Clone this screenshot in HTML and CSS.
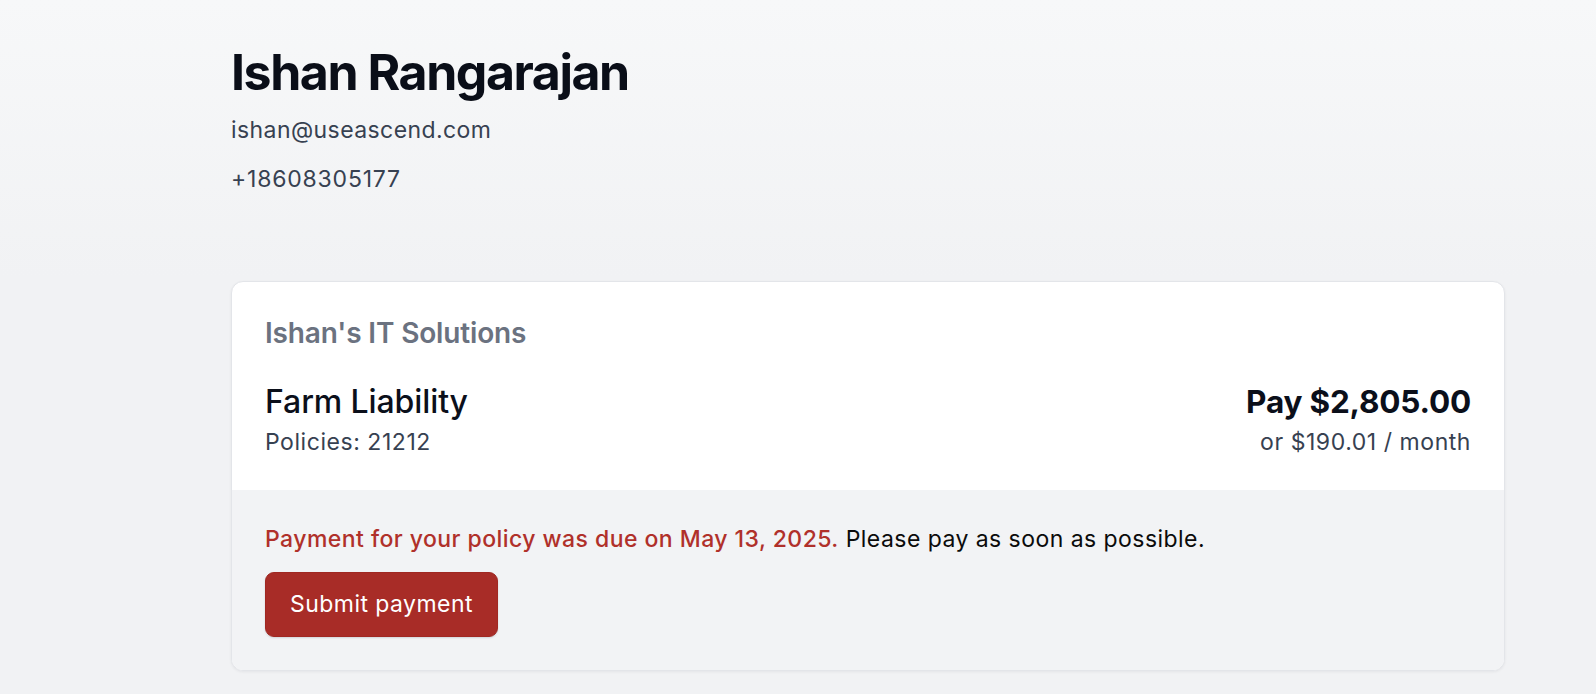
FILE: index.html
```html
<!DOCTYPE html>
<html lang="en">
<head>
<meta charset="utf-8">
<title>Ishan Rangarajan</title>
<link rel="stylesheet" href="styles.css">
</head>
<body>
<main class="page">
  <header class="profile">
    <h1 class="profile-name">Ishan Rangarajan</h1>
    <p class="profile-email">ishan@useascend.com</p>
    <p class="profile-phone">+18608305177</p>
  </header>

  <section class="card">
    <div class="card-body">
      <h2 class="company">Ishan's IT Solutions</h2>
      <div class="policy-row">
        <div class="policy-info">
          <div class="policy-name">Farm Liability</div>
          <div class="policy-meta">Policies: 21212</div>
        </div>
        <div class="policy-price">
          <div class="price-total">Pay $2,805.00</div>
          <div class="price-monthly">or $190.01 / month</div>
        </div>
      </div>
    </div>
    <div class="card-footer">
      <p class="notice"><span class="notice-due">Payment for your policy was due on May 13, 2025.</span> Please pay as soon as possible.</p>
      <button class="btn-pay" type="button">Submit payment</button>
    </div>
  </section>
</main>
</body>
</html>
```

FILE: styles.css
```css
* { box-sizing: border-box; }

html, body {
  margin: 0;
  height: 100%;
}

body {
  font-family: Inter, "Noto Sans", "Liberation Sans", sans-serif;
  background: linear-gradient(180deg, #f7f8f9 0%, #f1f2f4 40%, #f1f2f4 100%);
  color: #0b0f1a;
}

.page {
  padding: 42px 91px 0 231px;
}

.profile-name {
  margin: 0;
  font-size: 50px;
  line-height: 60px;
  font-weight: 700;
  color: #0a0e18;
  letter-spacing: -1.45px;
}

.profile-email,
.profile-phone {
  margin: 0;
  font-size: 23px;
  line-height: 34px;
  color: #374151;
}

.profile-email { margin-top: 11px; letter-spacing: 0.42px; }
.profile-phone { margin-top: 15px; letter-spacing: 0.8px; }

.card {
  margin-top: 85px;
  background: #ffffff;
  border: 1px solid #e3e5e9;
  border-radius: 12px;
  box-shadow: 0 1px 3px rgba(16, 24, 40, 0.06);
  overflow: hidden;
}

.card-body {
  padding: 32px 33px 31px 33px;
}

.company {
  margin: 0;
  font-size: 28px;
  line-height: 39px;
  font-weight: 600;
  color: #6b7280;
  letter-spacing: -0.15px;
}

.policy-row {
  margin-top: 29px;
  display: flex;
  justify-content: space-between;
  align-items: flex-start;
}

.policy-name {
  font-size: 32px;
  line-height: 40px;
  font-weight: 500;
  color: #0b0f1a;
  letter-spacing: -0.1px;
}

.policy-meta {
  margin-top: 3px;
  font-size: 23px;
  line-height: 34px;
  color: #374151;
  letter-spacing: 0.55px;
}

.policy-price {
  text-align: right;
}

.price-total {
  font-size: 31.5px;
  line-height: 40px;
  font-weight: 700;
  color: #0b0f1a;
  letter-spacing: -0.2px;
}

.price-monthly {
  margin-top: 3px;
  font-size: 23px;
  line-height: 34px;
  color: #374151;
  letter-spacing: 0.55px;
}

.card-footer {
  background: #f2f3f5;
  padding: 32px 33px 33px 33px;
}

.notice {
  margin: 0;
  font-size: 23px;
  line-height: 34px;
  color: #0b0b0b;
  letter-spacing: 0.45px;
}

.notice-due {
  color: #b0302a;
  font-weight: 500;
}

.btn-pay {
  margin-top: 16px;
  display: inline-block;
  font-family: inherit;
  font-size: 23px;
  line-height: 34px;
  font-weight: 400;
  letter-spacing: 0.45px;
  color: #ffffff;
  background: #a82c27;
  border: 1px solid #a02822;
  border-radius: 9px;
  padding: 14px 24px 15px;
  box-shadow: 0 1px 2px rgba(16, 24, 40, 0.14);
  cursor: pointer;
}
```
